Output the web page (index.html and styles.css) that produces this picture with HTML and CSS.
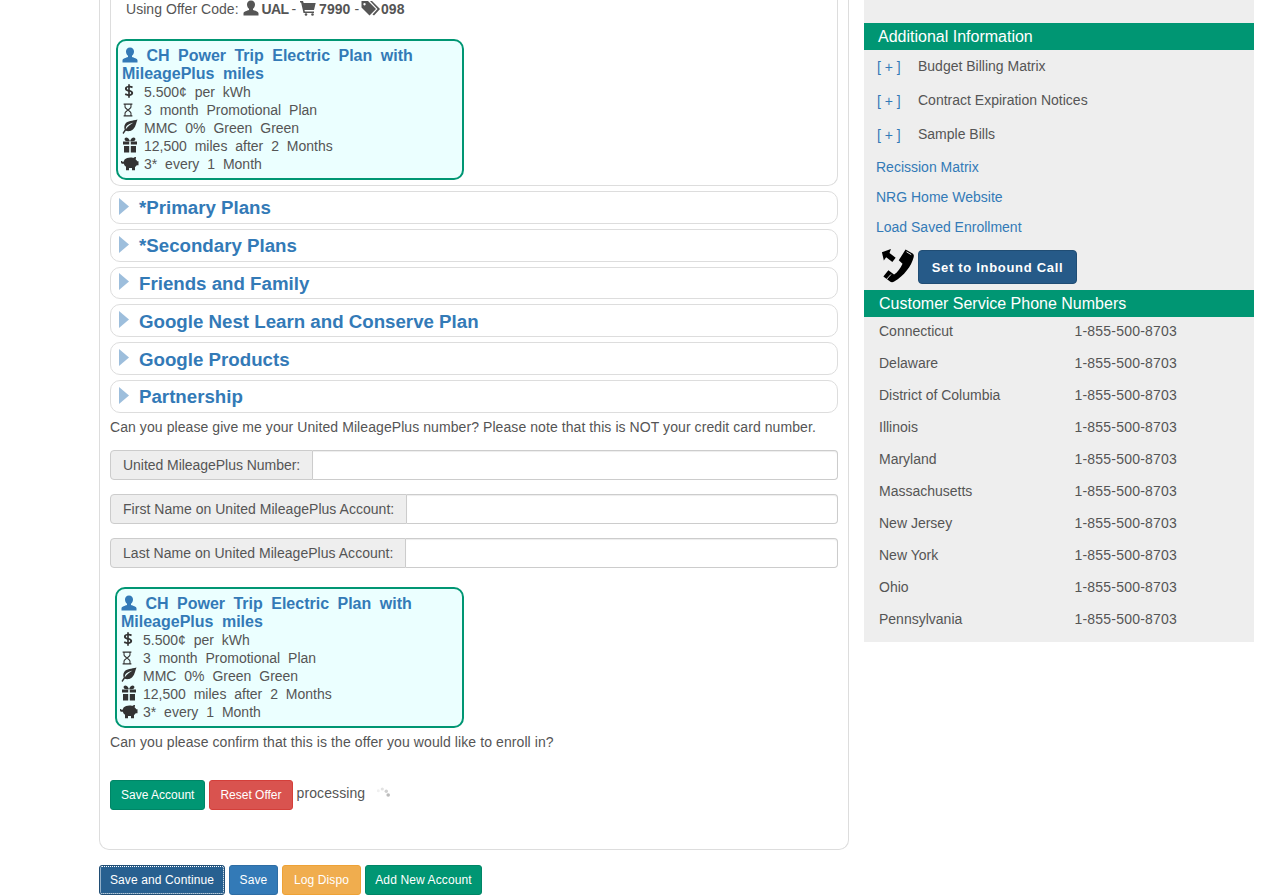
FILE: index.html
```html
<!DOCTYPE html>
<html>
<head>
    <title>Enrollment - Offer</title>
    <meta charset="UTF-8">
    <link rel="stylesheet" href="styles.css">
</head>
<body>

<svg class="defs" width="0" height="0">
    <symbol id="i-user" viewBox="0 0 16 16"><path d="M8 0.500c-2.600 0-4 1.800-4 4 0 1.800 0.800 3.300 2 4.200v1.300c-1.900 0.700-5.500 1.500-5.500 3.300v2.200h15v-2.200c0-1.800-3.600-2.600-5.500-3.300v-1.300c1.200-0.900 2-2.400 2-4.200 0-2.200-1.400-4-4-4z"/></symbol>
    <symbol id="i-cart" viewBox="0 0 16 16"><path d="M0 1h3l0.700 2h12l-1.700 7h-9.500l0.400 1.500h9.100v1.500h-10.500l-2.400-10.500h-1.100z"/><circle cx="6" cy="14.500" r="1.300"/><circle cx="12.500" cy="14.500" r="1.300"/></symbol>
    <symbol id="i-tags" viewBox="0 0 20 16"><path d="M0.500 1h6.500l8 8-6.500 6.500-8-8zM3.500 3a1.200 1.200 0 1 0 0.010 0z" fill-rule="evenodd"/><path d="M9 1h2l8 8-6 6.500-1.500-1 5-5.500z"/></symbol>
    <symbol id="i-dollar" viewBox="0 0 12 16"><path d="M5 0h2v1.800c1.400 0.100 2.600 0.400 3.600 0.900l-0.700 2.100c-1-0.500-2-0.800-2.900-0.900v2.800c2.400 0.700 4 1.700 4 3.800 0 2-1.600 3.200-4 3.400v2.100h-2v-2c-1.500-0.100-2.900-0.500-4-1.100l0.800-2.100c1 0.600 2.200 1 3.200 1.100v-3.100c-2.300-0.700-3.900-1.600-3.900-3.700 0-1.900 1.600-3.100 3.900-3.200zM5 3.900c-0.900 0.100-1.500 0.600-1.500 1.200 0 0.700 0.600 1 1.500 1.400zM7 9v2.800c1-0.100 1.600-0.600 1.600-1.300 0-0.700-0.600-1.100-1.600-1.500z" fill-rule="evenodd"/></symbol>
    <symbol id="i-glass" viewBox="0 0 12 16"><path d="M1 0.500h10v1.500h-1v2.500c0 1.500-2.300 2.500-2.800 3.500 0.500 1 2.800 2 2.800 3.500v2.500h1v1.500h-10v-1.500h1v-2.500c0-1.500 2.300-2.500 2.800-3.500-0.500-1-2.800-2-2.800-3.500v-2.500h-1zM3.200 2v2.300c0 1 2.800 2.700 2.800 3.200 0-0.500 2.800-2.200 2.800-3.200v-2.300zM6 8.500c0 0.500-2.800 2.200-2.800 3.200v2.300h5.600v-2.300c0-1-2.800-2.700-2.800-3.200z" fill-rule="evenodd"/></symbol>
    <symbol id="i-leaf" viewBox="0 0 16 16"><path d="M15.500 0.500c-5 1.500-10 1-12.300 4.500-1.300 2-1 4.300-0.500 5.500l-2.200 3.500 1 1 2.300-3.300c1.500 0.700 4.300 0.800 6.500-0.700 3.500-2.500 3.500-6.500 5.200-10.500zM11.500 3.500c-1.500 0.800-4 1.200-6 2.800-1.300 1-1.700 2.500-1.700 4 2-3 4.700-5 7.700-6.800z" fill-rule="evenodd"/></symbol>
    <symbol id="i-gift" viewBox="0 0 16 16"><path d="M1 4.500h6.200v3h-6.200zM8.800 4.500h6.200v3h-6.200zM2 9h5.200v6.500h-5.200zM8.800 9h5.200v6.500h-5.200z"/><path d="M8 4.200c-1-2.800-2.500-3.700-3.700-3.700-1.100 0-1.700 0.800-1.700 1.700 0 1.200 1.200 2 2.700 2h5.400c1.500 0 2.700-0.800 2.700-2 0-0.900-0.600-1.700-1.700-1.700-1.200 0-2.700 0.900-3.700 3.700z"/></symbol>
    <symbol id="i-pig" viewBox="0 0 18 14"><path d="M3.500 2.500c1.500-1.300 3.500-2 6-2 1 0 2 0.100 2.800 0.400 0.700-0.700 1.700-0.900 2.700-0.900l-0.300 2.400c0.700 0.500 1.200 1.100 1.500 1.800h1.300v4h-1.800c-0.400 0.700-1 1.300-1.700 1.700v3.300h-3v-2.300c-1 0.200-2 0.200-3 0v2.300h-3v-3.400c-1.200-0.800-1.900-1.800-2.100-3h-1.400c-0.900 0-1.500-0.700-1.500-1.500v-1.300h1c0 0.500 0.200 0.800 0.700 0.800h0.900c0.200-0.800 0.500-1.500 1-2.100z"/></symbol>
    <symbol id="i-phone" viewBox="0 0 36 36"><path d="M1 3.500l9.500-3.500-1.500 4.200 6.500 5-3.500 4.500-6.500-5-2.500 3.500z"/><path d="M26 0.500l7 4c2 1.200 2 2.500 1.500 4.500-2.500 9.500-10 19-20.500 25.500-1.800 1-3.500 0.800-4.800-0.300l-6.700-5 5.300-6.700 6 4.500c3.500-2.200 7-7 9-11.500l-4-3.500z"/><path d="M27 3l5 3M10.500 27l-4.500 5" stroke="#eee" fill="none"/></symbol>
    <symbol id="i-arrow" viewBox="0 0 10 17"><path d="M0 0l10 8.500-10 8.500z"/></symbol>
</svg>

<div class="page">
    <div class="main">
        <div class="panel">
            <div class="offer">
                <div class="offer-code">
                    Using Offer Code: <svg class="ic"><use href="#i-user"/></svg> <b class="carrier">UAL</b> - <svg class="ic ic-cart"><use href="#i-cart"/></svg> <b>7990</b> - <svg class="ic ic-tags"><use href="#i-tags"/></svg><b>098</b>
                </div>
                <div class="plan plan-first">
                    <div class="plan-title"><svg class="ic ic-blue"><use href="#i-user"/></svg> CH Power Trip Electric Plan with MileagePlus miles</div>
                    <div class="plan-row"><span class="plan-ic"><svg class="ic ic-dollar"><use href="#i-dollar"/></svg></span>5.500¢ per kWh</div>
                    <div class="plan-row"><span class="plan-ic"><svg class="ic ic-glass"><use href="#i-glass"/></svg></span>3 month Promotional Plan</div>
                    <div class="plan-row"><span class="plan-ic"><svg class="ic"><use href="#i-leaf"/></svg></span>MMC 0% Green Green</div>
                    <div class="plan-row"><span class="plan-ic"><svg class="ic"><use href="#i-gift"/></svg></span>12,500 miles after 2 Months</div>
                    <div class="plan-row"><span class="plan-ic"><svg class="ic ic-pig"><use href="#i-pig"/></svg></span>3* every 1 Month</div>
                </div>
            </div>

            <div class="acc"><svg class="acc-arrow"><use href="#i-arrow"/></svg>*Primary Plans</div>
            <div class="acc"><svg class="acc-arrow"><use href="#i-arrow"/></svg>*Secondary Plans</div>
            <div class="acc"><svg class="acc-arrow"><use href="#i-arrow"/></svg>Friends and Family</div>
            <div class="acc"><svg class="acc-arrow"><use href="#i-arrow"/></svg>Google Nest Learn and Conserve Plan</div>
            <div class="acc"><svg class="acc-arrow"><use href="#i-arrow"/></svg>Google Products</div>
            <div class="acc"><svg class="acc-arrow"><use href="#i-arrow"/></svg>Partnership</div>

            <p class="question">Can you please give me your United MileagePlus number? Please note that this is NOT your credit card number.</p>

            <div class="field field-short"><span class="field-label">United MileagePlus Number:</span><input class="field-input" type="text"></div>
            <div class="field"><span class="field-label">First Name on United MileagePlus Account:</span><input class="field-input" type="text"></div>
            <div class="field"><span class="field-label">Last Name on United MileagePlus Account:</span><input class="field-input" type="text"></div>

            <div class="plan plan-second">
                <div class="plan-title"><svg class="ic ic-blue"><use href="#i-user"/></svg> CH Power Trip Electric Plan with MileagePlus miles</div>
                <div class="plan-row"><span class="plan-ic"><svg class="ic ic-dollar"><use href="#i-dollar"/></svg></span>5.500¢ per kWh</div>
                <div class="plan-row"><span class="plan-ic"><svg class="ic ic-glass"><use href="#i-glass"/></svg></span>3 month Promotional Plan</div>
                <div class="plan-row"><span class="plan-ic"><svg class="ic"><use href="#i-leaf"/></svg></span>MMC 0% Green Green</div>
                <div class="plan-row"><span class="plan-ic"><svg class="ic"><use href="#i-gift"/></svg></span>12,500 miles after 2 Months</div>
                <div class="plan-row"><span class="plan-ic"><svg class="ic ic-pig"><use href="#i-pig"/></svg></span>3* every 1 Month</div>
            </div>

            <p class="confirm">Can you please confirm that this is the offer you would like to enroll in?</p>

            <div class="actions">
                <button class="btn btn-green">Save Account</button>
                <button class="btn btn-red">Reset Offer</button>
                <span class="processing">processing</span>
                <svg class="spinner" width="14" height="11" viewBox="0 0 14 11">
                    <circle cx="1.300" cy="3.700" r="1.500" fill="#f0f0f0"/>
                    <circle cx="5.300" cy="2" r="1.600" fill="#e2e2e2"/>
                    <circle cx="9.300" cy="4.300" r="1.700" fill="#d0d0d0"/>
                    <circle cx="11.200" cy="8" r="1.800" fill="#bbb"/>
                </svg>
            </div>
        </div>

        <div class="bottom">
            <button class="btn btn-navy">Save and Continue</button>
            <button class="btn btn-blue">Save</button>
            <button class="btn btn-orange">Log Dispo</button>
            <button class="btn btn-green btn-add">Add New Account</button>
        </div>
    </div>

    <div class="side">
        <div class="side-head">Additional Information</div>
        <div class="toggle"><a class="toggle-link">[ + ]</a><span>Budget Billing Matrix</span></div>
        <div class="toggle"><a class="toggle-link">[ + ]</a><span>Contract Expiration Notices</span></div>
        <div class="toggle"><a class="toggle-link">[ + ]</a><span>Sample Bills</span></div>
        <a class="side-link">Recission Matrix</a>
        <a class="side-link">NRG Home Website</a>
        <a class="side-link">Load Saved Enrollment</a>
        <div class="inbound">
            <svg class="phone"><use href="#i-phone"/></svg>
            <button class="inbound-btn">Set to Inbound Call</button>
        </div>
        <div class="side-head side-head-wide">Customer Service Phone Numbers</div>
        <div class="phones">
            <div class="phone-row"><span>Connecticut</span><span class="phone-num">1-855-500-8703</span></div>
            <div class="phone-row"><span>Delaware</span><span class="phone-num">1-855-500-8703</span></div>
            <div class="phone-row"><span>District of Columbia</span><span class="phone-num">1-855-500-8703</span></div>
            <div class="phone-row"><span>Illinois</span><span class="phone-num">1-855-500-8703</span></div>
            <div class="phone-row"><span>Maryland</span><span class="phone-num">1-855-500-8703</span></div>
            <div class="phone-row"><span>Massachusetts</span><span class="phone-num">1-855-500-8703</span></div>
            <div class="phone-row"><span>New Jersey</span><span class="phone-num">1-855-500-8703</span></div>
            <div class="phone-row"><span>New York</span><span class="phone-num">1-855-500-8703</span></div>
            <div class="phone-row"><span>Ohio</span><span class="phone-num">1-855-500-8703</span></div>
            <div class="phone-row"><span>Pennsylvania</span><span class="phone-num">1-855-500-8703</span></div>
        </div>
    </div>
</div>

</body>
</html>
```

FILE: styles.css
```css
html,
body{
    margin: 0;
    height: 895px;
    overflow: hidden;
}

body{
    font-family: "Liberation Sans", Arial, Helvetica, sans-serif;
    font-size: 14px;
    line-height: 20px;
    color: #555;
    background-color: #fff;
}

.defs{
    display: block;
    height: 0;
}

.page{
    display: flex;
    align-items: flex-start;
    padding-left: 99px;
}

.main{
    width: 750px;
    flex: none;
}

.side{
    width: 390px;
    margin-left: 15px;
    flex: none;
    padding-top: 23px;
    padding-bottom: 5px;
    background-color: #eee;
}

/* left panel */
.panel{
    height: 850px;
    box-sizing: border-box;
    padding: 0 10px;
    border: 1px solid #ddd;
    border-top: 0;
    border-radius: 0 0 10px 10px;
}

.offer{
    height: 186px;
    box-sizing: border-box;
    padding: 0 5px;
    border: 1px solid #ddd;
    border-top: 0;
    border-radius: 0 0 10px 10px;
}

.offer-code{
    height: 18px;
    line-height: 19px;
    padding-left: 10px;
    letter-spacing: 0.05px;
}

.carrier{
    margin-left: -1px;
    margin-right: -1px;
    letter-spacing: -0.6px;
}

.ic{
    display: inline-block;
    width: 16px;
    height: 16px;
    vertical-align: -2px;
    fill: currentColor;
}

.ic-cart{
    margin-right: -1px;
}

.ic-tags{
    width: 20px;
    margin-left: -2px;
}

.ic-blue{
    fill: #337ab7;
}

.ic-dollar{
    width: 10px;
    margin-left: 2px;
}

.ic-glass{
    width: 12px;
    height: 14px;
}

.ic-pig{
    width: 18px;
    height: 14px;
    margin-left: -1px;
}

/* plan box */
.plan{
    width: 348px;
    height: 141px;
    box-sizing: border-box;
    padding: 6px 4px 0;
    border: 2px solid #009673;
    border-radius: 10px;
    background-color: #ebffff;
    word-spacing: 4px;
}

.plan-first{
    margin-top: 21px;
}

.plan-second{
    width: 349px;
    margin-top: 19px;
    margin-left: 5px;
}

.plan-title{
    font-size: 16px;
    line-height: 18px;
    font-weight: bold;
    color: #337ab7;
}

.plan-row{
    display: flex;
    line-height: 18px;
}

.plan-ic{
    width: 22px;
    flex: none;
    color: #333;
}

/* accordion */
.acc{
    display: flex;
    align-items: center;
    height: 32.8px;
    box-sizing: border-box;
    margin-top: 5px;
    padding-left: 8px;
    padding-top: 2px;
    border: 1px solid #ddd;
    border-radius: 10px;
    font-size: 18.7px;
    font-weight: bold;
    color: #337ab7;
}

.acc-arrow{
    width: 10px;
    height: 17px;
    margin-right: 10px;
    margin-bottom: 4px;
    fill: #9dbedc;
}

/* form fields */
.question{
    margin: 4px 0 13px;
    letter-spacing: 0.075px;
}

.field{
    display: flex;
    height: 30px;
    margin-bottom: 14px;
}

.field-label{
    padding: 0 12px;
    line-height: 28px;
    border: 1px solid #ccc;
    border-radius: 4px 0 0 4px;
    background-color: #eee;
    letter-spacing: 0.03px;
}

.field-short .field-label{
    letter-spacing: -0.04px;
}

.field-input{
    flex: 1;
    min-width: 0;
    margin: 0;
    padding: 0 12px;
    border: 1px solid #ccc;
    border-left: 0;
    border-radius: 0 4px 4px 0;
    background-color: #fff;
    box-shadow: inset 0 1px 1px rgba(0,0,0,.075);
}

.confirm{
    margin: 4px 0 28px;
    letter-spacing: 0.09px;
}

.actions{
    display: flex;
    align-items: flex-start;
    gap: 4px;
}

.processing{
    line-height: 26px;
    letter-spacing: 0.1px;
}

.spinner{
    margin: 7px 0 0 8px;
}

/* buttons */
.btn{
    height: 30px;
    margin: 0;
    padding: 0 10px;
    border: 1px solid transparent;
    border-radius: 3px;
    font-family: inherit;
    font-size: 12px;
    line-height: 18px;
    color: #fff;
}

.btn-green{
    background-color: #009673;
    border-color: #008566;
}

.btn-red{
    background-color: #d9534f;
    border-color: #d43f3a;
}

.btn-navy{
    width: 126px;
    background-color: #286090;
    border-color: #204d74;
    outline: 1px dotted #fff;
    outline-offset: -2px;
}

.btn-blue{
    width: 49px;
    background-color: #337ab7;
    border-color: #2e6da4;
}

.btn-orange{
    width: 79px;
    background-color: #f0ad4e;
    border-color: #eea236;
}

.btn-add{
    width: 117px;
}

.bottom{
    display: flex;
    gap: 4px;
    margin-top: 15px;
}

.bottom .btn{
    padding: 0;
    letter-spacing: 0.12px;
}

/* right column */
.side-head{
    height: 27px;
    padding-left: 14px;
    line-height: 27px;
    font-size: 16px;
    color: #fff;
    background-color: #009673;
}

.side-head-wide{
    padding-left: 15px;
}

.toggle{
    display: flex;
    height: 34px;
    padding-left: 13px;
    line-height: 34px;
}

.toggle span{
    position: relative;
    top: -1px;
}

.toggle-link{
    width: 41px;
    flex: none;
    color: #337ab7;
}

.side-link{
    display: block;
    height: 30px;
    padding-left: 12px;
    line-height: 30px;
    color: #337ab7;
}

.inbound{
    display: flex;
    align-items: flex-start;
    height: 42px;
    margin-top: 6px;
    padding-left: 17px;
}

.phone{
    width: 34px;
    height: 36px;
    margin-right: 3px;
    fill: #000;
}

.inbound-btn{
    width: 159px;
    height: 34px;
    margin-top: 2px;
    padding: 0;
    border: 1px solid #204d74;
    border-radius: 4px;
    background-color: #265a88;
    font-family: inherit;
    font-size: 13px;
    font-weight: bold;
    letter-spacing: 0.7px;
    color: #fff;
}

.phone-row{
    display: flex;
    height: 32px;
    padding-left: 15px;
    line-height: 28px;
}

.phone-row span:first-child{
    width: 195.5px;
}

.phone-num{
    letter-spacing: 0.2px;
}
```
